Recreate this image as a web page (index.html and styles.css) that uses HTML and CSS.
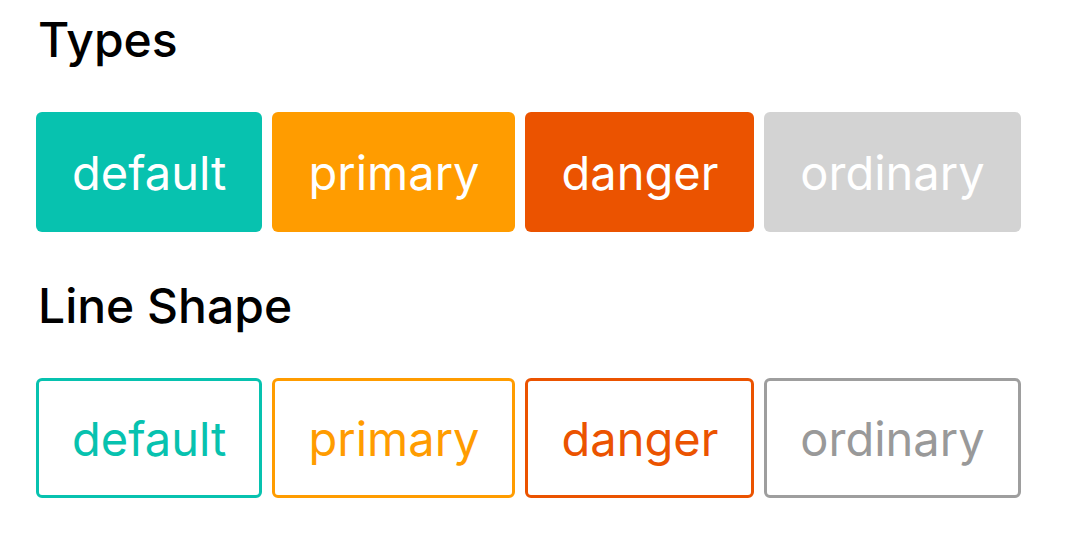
FILE: index.html
```html
<!DOCTYPE html>
<html>
  <head>
    <title>Buttons</title>
    <link rel="stylesheet" href="styles.css">
  </head>
  <body>
    <div class="page">
      <h2 class="title">Types</h2>
      <div class="row">
        <button class="btn btn-default">default</button>
        <button class="btn btn-primary">primary</button>
        <button class="btn btn-danger">danger</button>
        <button class="btn btn-ordinary">ordinary</button>
      </div>
      <h2 class="title">Line Shape</h2>
      <div class="row">
        <button class="btn line line-default">default</button>
        <button class="btn line line-primary">primary</button>
        <button class="btn line line-danger">danger</button>
        <button class="btn line line-ordinary">ordinary</button>
      </div>
    </div>
  </body>
</html>
```

FILE: styles.css
```css
body{
  margin: 0;
  background: #fff;
  font-family: Inter, "Noto Sans", sans-serif;
}
.page{
  padding: 16px 36px 0 36px;
}
.title{
  margin: 0 0 48px 2px;
  font-size: 48px;
  line-height: 48px;
  font-weight: 500;
  color: #000;
}
.row{
  display: flex;
  gap: 10px;
  margin-bottom: 50px;
}
.btn{
  display: flex;
  align-items: center;
  justify-content: center;
  height: 120px;
  padding: 0 36px;
  border: none;
  border-radius: 6px;
  font-family: Inter, "Noto Sans", sans-serif;
  font-size: 47px;
  color: #fff;
}
.btn-default{ background: #07c2af; }
.btn-primary{ background: #ff9c00; }
.btn-danger{ background: #eb5300; }
.btn-ordinary{ background: #d3d3d3; }

.line{
  background: #fff;
  border: 3px solid;
  padding: 0 33px;
}
.line-default{ color: #07c2af; border-color: #07c2af; }
.line-primary{ color: #ff9c00; border-color: #ff9c00; }
.line-danger{ color: #eb5300; border-color: #eb5300; }
.line-ordinary{ color: #999; border-color: #9e9e9e; }
```
